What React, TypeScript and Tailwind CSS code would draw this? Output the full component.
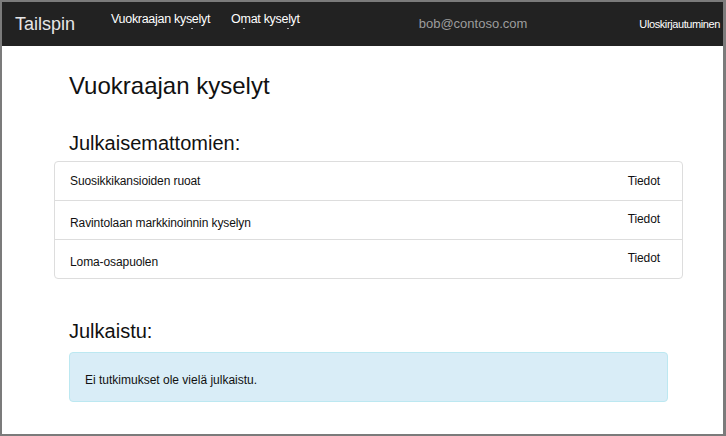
const rows = [
  { name: "Suosikkikansioiden ruoat", top: false },
  { name: "Ravintolaan markkinoinnin kyselyn", top: true },
  { name: "Loma-osapuolen", top: true },
];

export default function App() {
  return (
    <div className="h-[436px] w-[726px] overflow-hidden bg-[#7b7b7b] pt-[2px] pl-[2px] pr-[3px] pb-[2px] font-['Liberation_Sans',Arial,sans-serif]">
      <div className="flex h-full flex-col bg-white">
        <header className="flex h-[44px] items-center bg-[#222222] text-white">
          <div className="ml-[13px] text-[18px] text-[#e6e6e6]">Tailspin</div>
          <nav className="ml-[36px] flex gap-[21px] text-[12.5px]">
            <a className="relative -mt-[10px] tracking-[-0.3px]">
              Vuokraajan kyselyt
              <span className="absolute left-[80px] top-[18px] h-px w-[2px] bg-[#aaa]" />
            </a>
            <a className="relative -mt-[10px] tracking-[-0.3px]">
              Omat kyselyt
              <span className="absolute left-[12px] top-[18px] h-px w-[2px] bg-[#aaa]" />
              <span className="absolute left-[56px] top-[18px] h-px w-[2px] bg-[#aaa]" />
            </a>
          </nav>
          <div className="ml-[119px] text-[13px] text-[#9d9d9d]">bob@contoso.com</div>
          <a className="ml-auto mr-[3px] text-[11px] tracking-[-0.4px]">Uloskirjautuminen</a>
        </header>

        <main className="ml-[52px] w-[629px] text-[#111]">
          <h1 className="mt-[25px] px-[15px] text-[24px] leading-[30px]">Vuokraajan kyselyt</h1>
          <h2 className="mt-[30px] px-[15px] text-[20px] leading-[24px]">Julkaisemattomien:</h2>
          <div className="mt-[6px] rounded-[4px] border border-[#dddddd]">
            {rows.map((r, i) => (
              <div
                key={r.name}
                className={`flex h-[38px] items-center justify-between px-[15px] text-[12px] tracking-[-0.1px] ${i > 0 ? "h-[39px] border-t border-[#dddddd]" : ""}`}
              >
                <span className={r.top ? "mt-[5px]" : ""}>{r.name}</span>
                <span className={`mr-[7px] text-[12px] ${r.top ? "-mt-[2px]" : ""}`}>Tiedot</span>
              </div>
            ))}
          </div>
          <h2 className="mt-[40px] px-[15px] text-[20px] leading-[24px]">Julkaistu:</h2>
          <div className="mx-[15px] mt-[9px] flex h-[50px] items-center rounded-[4px] border border-[#bce8f1] bg-[#d9edf7] px-[15px] pt-[6px] text-[12px]">
            Ei tutkimukset ole vielä julkaistu.
          </div>
        </main>
      </div>
    </div>
  );
}
